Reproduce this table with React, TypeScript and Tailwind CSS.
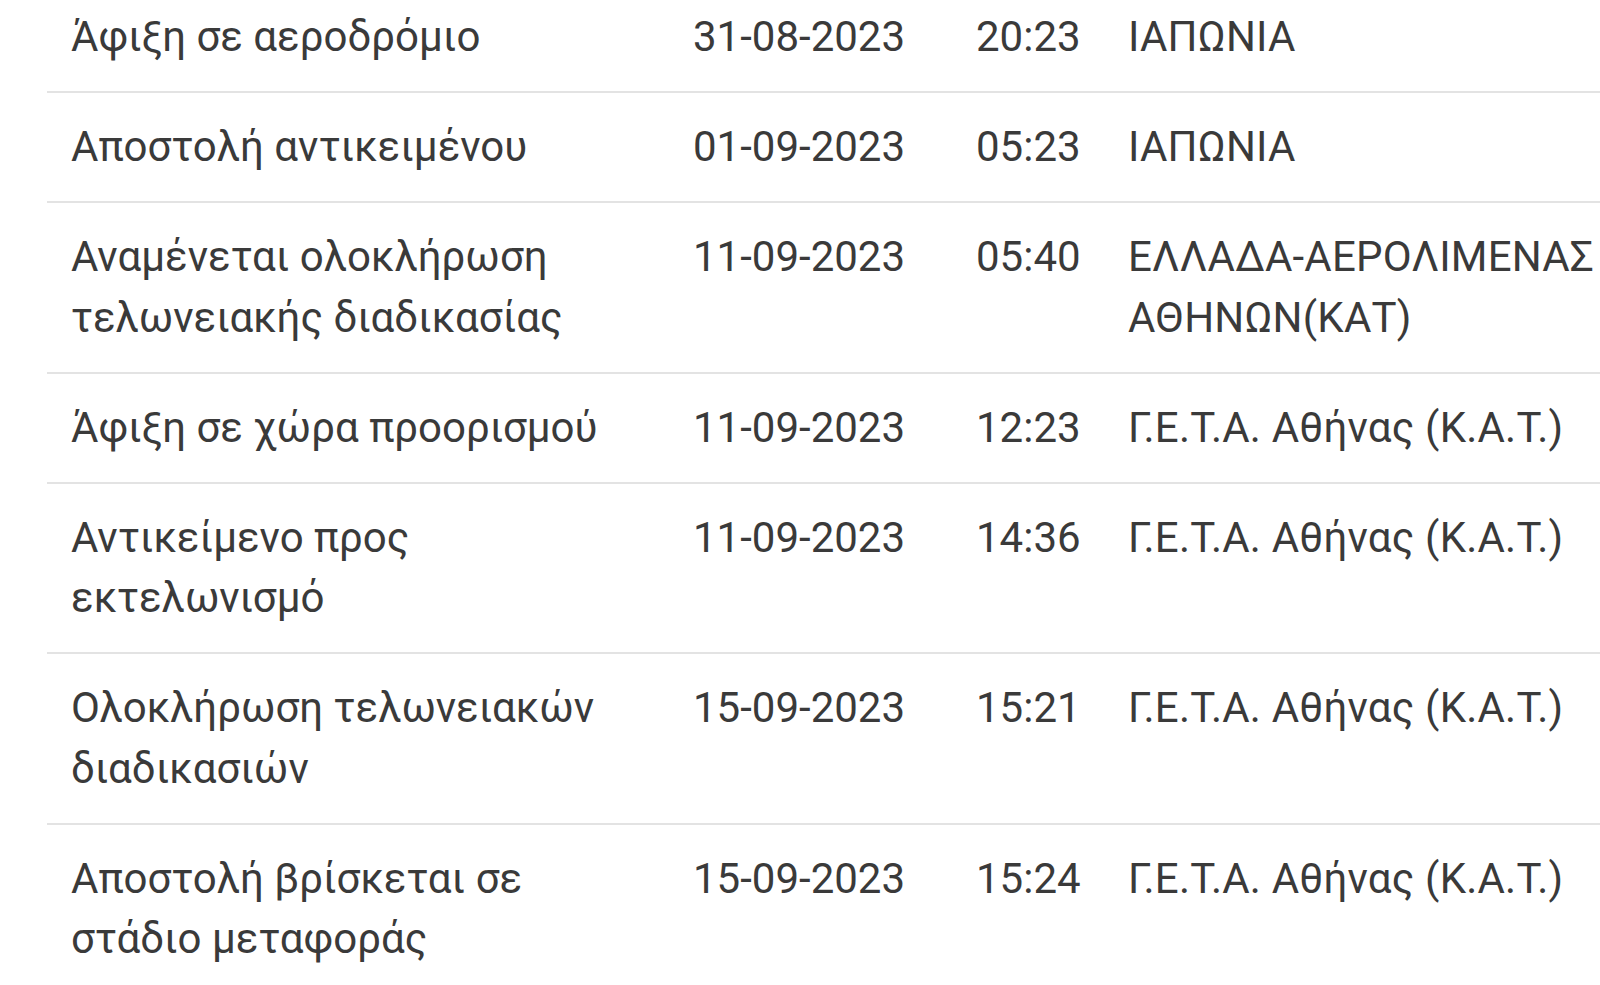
const rows = [
  { status: ["Άφιξη σε αεροδρόμιο"], date: "31-08-2023", time: "20:23", place: ["ΙΑΠΩΝΙΑ"] },
  { status: ["Αποστολή αντικειμένου"], date: "01-09-2023", time: "05:23", place: ["ΙΑΠΩΝΙΑ"] },
  {
    status: ["Αναμένεται ολοκλήρωση", "τελωνειακής διαδικασίας"],
    date: "11-09-2023",
    time: "05:40",
    place: ["ΕΛΛΑΔΑ-ΑΕΡΟΛΙΜΕΝΑΣ", "ΑΘΗΝΩΝ(ΚΑΤ)"],
  },
  { status: ["Άφιξη σε χώρα προορισμού"], date: "11-09-2023", time: "12:23", place: ["Γ.Ε.Τ.Α. Αθήνας (Κ.Α.Τ.)"] },
  { status: ["Αντικείμενο προς", "εκτελωνισμό"], date: "11-09-2023", time: "14:36", place: ["Γ.Ε.Τ.Α. Αθήνας (Κ.Α.Τ.)"] },
  { status: ["Ολοκλήρωση τελωνειακών", "διαδικασιών"], date: "15-09-2023", time: "15:21", place: ["Γ.Ε.Τ.Α. Αθήνας (Κ.Α.Τ.)"] },
  { status: ["Αποστολή βρίσκεται σε", "στάδιο μεταφοράς"], date: "15-09-2023", time: "15:24", place: ["Γ.Ε.Τ.Α. Αθήνας (Κ.Α.Τ.)"] },
]

export default function App() {
  return (
    <div className="h-[985px] overflow-hidden bg-white font-['Roboto',sans-serif] text-[42px] leading-[60.5px] text-[#3a3a3a]">
      <div className="-mt-[17px] ml-[47px]">
        {rows.map((row) => (
          <div
            key={row.status.join(" ") + row.time}
            className="grid grid-cols-[622px_283px_152px_1fr] border-b-2 border-[#e3e3e3] pl-6 pt-6 pb-[23.5px]"
          >
            <div>
              {row.status.map((line) => (
                <div key={line} className="whitespace-nowrap">{line}</div>
              ))}
            </div>
            <div className="whitespace-nowrap">{row.date}</div>
            <div className="whitespace-nowrap">{row.time}</div>
            <div>
              {row.place.map((line) => (
                <div key={line} className="whitespace-nowrap tracking-[0.2px]">{line}</div>
              ))}
            </div>
          </div>
        ))}
      </div>
    </div>
  )
}
